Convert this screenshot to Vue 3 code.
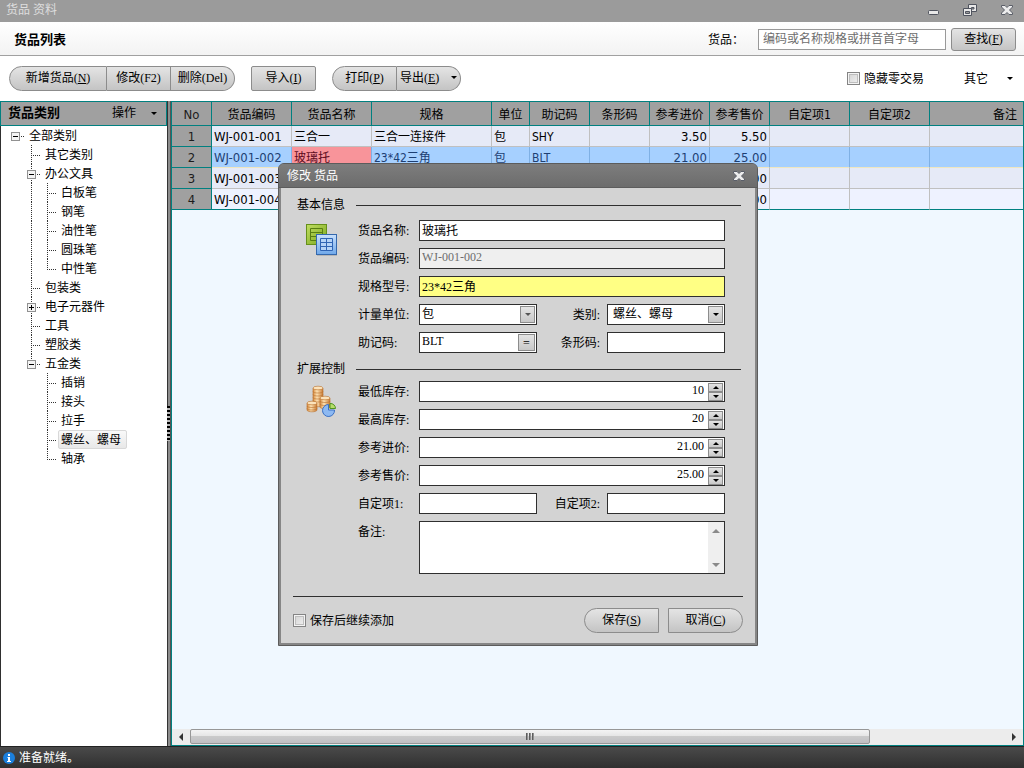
<script setup>
import { ref, computed } from "vue";

const status = ref("准备就绪。");
const keyword = ref("");
const hideZero = ref(false);
const showDialog = ref(true);
const keepAdding = ref(false);
const currentCategory = ref("螺丝、螺母");
const currentRow = ref(2);

// 货品类别树
const categories = ref([
  {
    name: "全部类别",
    open: true,
    children: [
      { name: "其它类别" },
      {
        name: "办公文具",
        open: true,
        children: [
          { name: "白板笔" },
          { name: "钢笔" },
          { name: "油性笔" },
          { name: "圆珠笔" },
          { name: "中性笔" },
        ],
      },
      { name: "包装类" },
      { name: "电子元器件", open: false, children: [] },
      { name: "工具" },
      { name: "塑胶类" },
      {
        name: "五金类",
        open: true,
        children: [
          { name: "插销" },
          { name: "接头" },
          { name: "拉手" },
          { name: "螺丝、螺母" },
          { name: "轴承" },
        ],
      },
    ],
  },
]);

// 展开成平铺的行，guides 为每一级的连接线
function flatten(nodes, guides, depth) {
  const rows = [];
  nodes.forEach((node, i) => {
    const last = i === nodes.length - 1;
    rows.push({ node, guides, depth, last });
    if (node.children && node.open) {
      const next = depth === 0 ? [false] : [...guides, !last];
      rows.push(...flatten(node.children, next, depth + 1));
    }
  });
  return rows;
}

const treeRows = computed(() => flatten(categories.value, [], 0));

// 表格列
const columns = [
  { key: "code", label: "货品编码", cls: "w80 latin" },
  { key: "name", label: "货品名称", cls: "w80" },
  { key: "spec", label: "规格", cls: "w120" },
  { key: "unit", label: "单位", cls: "w38" },
  { key: "memo", label: "助记码", cls: "w60" },
  { key: "barcode", label: "条形码", cls: "w60" },
  { key: "cost", label: "参考进价", cls: "w60 latin num" },
  { key: "price", label: "参考售价", cls: "w60 latin num" },
  { key: "custom1", label: "自定项1", cls: "w80" },
  { key: "custom2", label: "自定项2", cls: "w80" },
  { key: "remark", label: "备注", cls: "rest" },
];

const goods = ref([
  { no: 1, code: "WJ-001-001", name: "三合一", spec: "三合一连接件", unit: "包", memo: "SHY", cost: "3.50", price: "5.50" },
  { no: 2, code: "WJ-001-002", name: "玻璃托", spec: "23*42三角", unit: "包", memo: "BLT", cost: "21.00", price: "25.00" },
  { no: 3, code: "WJ-001-003", price: "0.00" },
  { no: 4, code: "WJ-001-004", price: "0.00" },
]);

const form = ref({
  name: "玻璃托",
  code: "WJ-001-002",
  spec: "23*42三角",
  unit: "包",
  category: "螺丝、螺母",
  memo: "BLT",
  barcode: "",
  custom1: "",
  custom2: "",
  remark: "",
});

const numbers = ref([
  { id: "min", label: "最低库存", value: "10", digits: 0 },
  { id: "max", label: "最高库存", value: "20", digits: 0 },
  { id: "cost", label: "参考进价", value: "21.00", digits: 2 },
  { id: "price", label: "参考售价", value: "25.00", digits: 2 },
]);

function step(item, delta) {
  item.value = (Number(item.value) + delta).toFixed(item.digits);
}
</script>

<template>
  <div class="window">
    <header class="titlebar">
      <span class="titlebar-text">货品 资料</span>
      <div class="titlebar-btns">
        <button aria-label="最小化">
          <svg width="14" height="14" viewBox="0 0 14 14">
            <rect x="2.500" y="7.500" width="10" height="4" rx="1" fill="#e8e8e8" stroke="#50545f" />
          </svg>
        </button>
        <button aria-label="还原">
          <svg width="16" height="14" viewBox="0 0 16 14">
            <path d="M6.500 1.500h8v7h-8z" fill="#e8e8e8" stroke="#50545f" />
            <path d="M9.500 4.500h2.500v1.500h-2.500z" fill="#9b9b9b" stroke="#50545f" />
            <path d="M1.500 5.500h8v7h-8z" fill="#e8e8e8" stroke="#50545f" />
            <path d="M3.500 8.500h4v2h-4z" fill="#9b9b9b" stroke="#50545f" />
          </svg>
        </button>
        <button aria-label="关闭">
          <svg width="14" height="14" viewBox="0 0 14 14">
            <path
              d="M1.500 2.500h3.500l2 2 2-2h3.500v1.500L9.500 7l3 3v1.500H9l-2-2-2 2H1.500V10l3-3-3-3z"
              fill="#ececec"
              stroke="#5a5e68"
            />
          </svg>
        </button>
      </div>
    </header>

    <div class="searchbar">
      <h1 class="page-title">货品列表</h1>
      <label class="search-label" for="keyword">货品：</label>
      <input id="keyword" v-model="keyword" class="search-input" type="text" placeholder="编码或名称规格或拼音首字母" />
      <button class="btn search-btn">查找(<u>F</u>)</button>
    </div>

    <div class="toolbar">
      <div class="btn-group">
        <button class="btn btn-add">新增货品(<u>N</u>)</button>
        <button class="btn btn-edit" @click="showDialog = true">修改(F2)</button>
        <button class="btn btn-del">删除(Del)</button>
      </div>
      <button class="btn btn-import">导入(<u>I</u>)</button>
      <div class="btn-group">
        <button class="btn btn-print">打印(<u>P</u>)</button>
        <button class="btn btn-export"><span>导出(<u>E</u>)</span><i class="caret"></i></button>
      </div>
      <label class="check hide-zero"><input v-model="hideZero" type="checkbox" />隐藏零交易</label>
      <button class="menu-btn">其它<i class="caret"></i></button>
    </div>

    <main class="main">
      <aside class="side">
        <div class="side-head">
          <b>货品类别</b>
          <button class="menu-btn side-menu">操作<i class="caret"></i></button>
        </div>
        <ul class="tree">
          <li v-for="row in treeRows" :key="row.node.name" class="tree-row">
            <svg v-for="(line, i) in row.guides" :key="i" class="tree-cell" width="16" height="19">
              <path v-if="line" class="dots" d="M8.500 0v19" />
            </svg>
            <svg
              class="tree-cell"
              width="16"
              height="19"
              @click="row.node.open = !row.node.open"
            >
              <path v-if="row.depth" class="dots" :d="row.last ? 'M8.500 0v10' : 'M8.500 0v19'" />
              <path class="dots" d="M8 10.500h10" />
              <g v-if="row.node.children">
                <rect x="4.500" y="6.500" width="8" height="8" fill="#f4f4f4" stroke="#919191" />
                <path d="M6 10.500h5" stroke="#000" />
                <path v-if="!row.node.open" d="M8.500 8v5" stroke="#000" />
              </g>
            </svg>
            <a
              class="tree-label"
              :class="{ active: row.node.name === currentCategory }"
              href="#"
              @click.prevent="currentCategory = row.node.name"
              >{{ row.node.name }}</a
            >
          </li>
        </ul>
      </aside>

      <div class="splitter"><span class="splitter-grip"></span></div>

      <section class="grid">
        <table class="goods">
          <thead>
            <tr>
              <th class="no">No</th>
              <th v-for="col in columns" :key="col.key" :class="col.cls">{{ col.label }}</th>
            </tr>
          </thead>
          <tbody>
            <tr
              v-for="item in goods"
              :key="item.no"
              :class="{ current: item.no === currentRow }"
              @click="currentRow = item.no"
            >
              <td class="no">{{ item.no }}</td>
              <td
                v-for="col in columns"
                :key="col.key"
                :class="[col.cls, { focus: item.no === currentRow && col.key === 'name' }]"
              >
                {{ item[col.key] }}
              </td>
            </tr>
          </tbody>
        </table>
        <div class="hscroll">
          <button class="hscroll-btn" aria-label="向左"><i class="tri left"></i></button>
          <div class="hscroll-thumb"><i></i><i></i><i></i></div>
          <div class="hscroll-rest"></div>
          <button class="hscroll-btn" aria-label="向右"><i class="tri right"></i></button>
        </div>
      </section>
    </main>

    <footer class="statusbar">
      <svg width="12" height="12" viewBox="0 0 12 12">
        <circle cx="6" cy="6" r="6" fill="#1b7fdc" />
        <path d="M5 2h2v2H5zM4.500 5H7v4h1v1H4V9h1V6h-.5z" fill="#fff" />
      </svg>
      <span>{{ status }}</span>
    </footer>

    <!-- 修改货品 -->
    <div v-if="showDialog" class="dialog" role="dialog">
      <div class="dialog-head">
        <span>修改 货品</span>
        <button aria-label="关闭" @click="showDialog = false">
          <svg width="14" height="14" viewBox="0 0 14 14">
            <path
              d="M1.500 2.500h3.500l2 2 2-2h3.500v1.500L9.500 7l3 3v1.500H9l-2-2-2 2H1.500V10l3-3-3-3z"
              fill="#ececec"
              stroke="#5a5e68"
            />
          </svg>
        </button>
      </div>

      <form class="dialog-body" @submit.prevent>
        <h2 class="section-title">基本信息</h2>
        <div class="section">
          <svg class="section-icon" width="34" height="34" viewBox="0 0 34 34">
            <defs>
              <linearGradient id="sheetGreen" x1="0" y1="0" x2="1" y2="1">
                <stop offset="0" stop-color="#c0de62" />
                <stop offset="1" stop-color="#7aa51c" />
              </linearGradient>
              <linearGradient id="sheetBlue" x1="0" y1="0" x2="0" y2="1">
                <stop offset="0" stop-color="#c9e0fb" />
                <stop offset="1" stop-color="#6fa8ea" />
              </linearGradient>
            </defs>
            <rect x=".5" y=".5" width="20" height="20" fill="url(#sheetGreen)" stroke="#66901a" />
            <path d="M4.500 4.500h12v12h-12zM4.500 8.500h12M4.500 12.500h12" fill="none" stroke="#587e12" />
            <rect x="11" y="31" width="20" height="1" fill="#b5b5b5" />
            <rect x="10.500" y="10.500" width="20" height="20" fill="url(#sheetBlue)" stroke="#3468ad" />
            <path d="M14.500 14.500h12v12h-12zM14.500 18.500h12M14.500 22.500h12M20.500 14.500v12" fill="#b4d3f7" stroke="#2f64b4" />
          </svg>
          <div class="fields">
            <label for="f-name">货品名称:</label>
            <input id="f-name" v-model="form.name" class="field wide" type="text" />

            <label for="f-code">货品编码:</label>
            <input id="f-code" v-model="form.code" class="field wide readonly" type="text" readonly />

            <label for="f-spec">规格型号:</label>
            <input id="f-spec" v-model="form.spec" class="field wide editing" type="text" />

            <label for="f-unit">计量单位:</label>
            <div class="combo">
              <select id="f-unit" v-model="form.unit" class="field">
                <option>包</option>
              </select>
              <span class="combo-arrow muted"><i class="caret"></i></span>
            </div>
            <label class="second" for="f-category">类别:</label>
            <div class="combo">
              <select id="f-category" v-model="form.category" class="field indent">
                <option>螺丝、螺母</option>
              </select>
              <span class="combo-arrow"><i class="caret"></i></span>
            </div>

            <label for="f-memo">助记码:</label>
            <div class="combo">
              <input id="f-memo" v-model="form.memo" class="field" type="text" />
              <button class="combo-arrow" type="button">=</button>
            </div>
            <label class="second" for="f-barcode">条形码:</label>
            <input id="f-barcode" v-model="form.barcode" class="field" type="text" />
          </div>
        </div>

        <h2 class="section-title extra">扩展控制</h2>
        <div class="section extra">
          <svg class="section-icon" width="34" height="34" viewBox="0 0 34 34">
            <defs>
              <linearGradient id="coin" x1="0" y1="0" x2="1" y2="0">
                <stop offset="0" stop-color="#d68a3e" />
                <stop offset=".4" stop-color="#fde2b4" />
                <stop offset="1" stop-color="#c87a34" />
              </linearGradient>
            </defs>
            <g stroke="#b9702e" stroke-width=".6">
              <path d="M7 3v17c0 2.400 10 2.400 10 0V3" fill="url(#coin)" />
              <path d="M7 6.500c0 2 10 2 10 0M7 9.500c0 2 10 2 10 0M7 12.500c0 2 10 2 10 0M7 15.500c0 2 10 2 10 0" fill="none" />
              <ellipse cx="12" cy="3" rx="5" ry="1.800" fill="#fce3bb" />
              <path d="M14 13v9c0 2.400 10 2.400 10 0v-9" fill="url(#coin)" />
              <path d="M14 16c0 2 10 2 10 0M14 19c0 2 10 2 10 0" fill="none" />
              <ellipse cx="19" cy="13" rx="5" ry="1.800" fill="#fce3bb" />
              <path d="M1 18v7c0 2.400 10 2.400 10 0v-7" fill="url(#coin)" />
              <path d="M1 21c0 2 10 2 10 0M1 23.500c0 2 10 2 10 0" fill="none" />
              <ellipse cx="6" cy="18" rx="5" ry="1.800" fill="#fce3bb" />
            </g>
            <path d="M22.500 19.500v5.500h6a6 6 0 1 1-6-5.500z" fill="#8db9f2" stroke="#3a70c4" />
            <path d="M24 18.500a5 5 0 0 1 5.500 5H24z" fill="#b7dd6a" stroke="#4f9421" />
          </svg>
          <div class="fields">
            <template v-for="item in numbers" :key="item.id">
              <label :for="'f-' + item.id">{{ item.label }}:</label>
              <div class="spin wide">
                <input :id="'f-' + item.id" v-model="item.value" class="field" type="text" />
                <span class="spin-btns">
                  <button type="button" aria-label="增加" @click="step(item, 1)"><i class="caret up"></i></button>
                  <button type="button" aria-label="减少" @click="step(item, -1)"><i class="caret"></i></button>
                </span>
              </div>
            </template>

            <label for="f-custom1">自定项1:</label>
            <input id="f-custom1" v-model="form.custom1" class="field" type="text" />
            <label class="second" for="f-custom2">自定项2:</label>
            <input id="f-custom2" v-model="form.custom2" class="field" type="text" />

            <label for="f-remark">备注:</label>
            <div class="memo wide">
              <textarea id="f-remark" v-model="form.remark"></textarea>
              <span class="memo-scroll"><i class="caret up"></i><i class="caret"></i></span>
            </div>
          </div>
        </div>

        <div class="dialog-foot">
          <label class="check"><input v-model="keepAdding" type="checkbox" />保存后继续添加</label>
          <button class="btn save" type="submit">保存(<u>S</u>)</button>
          <button class="btn cancel" type="button" @click="showDialog = false">取消(<u>C</u>)</button>
        </div>
      </form>
    </div>
  </div>
</template>

<style>
body {
  margin: 0;
}
</style>

<style scoped>
.window {
  position: relative;
  display: flex;
  flex-direction: column;
  min-height: 100vh;
  background: #fff;
  color: #000;
  font: 12px/16px "Liberation Serif", "Noto Sans CJK SC", sans-serif;
}

.window * {
  box-sizing: border-box;
}

button,
input,
select,
textarea {
  font: inherit;
  color: inherit;
  margin: 0;
  padding: 0;
  border-radius: 0;
  outline: none;
}

button {
  background: none;
  border: none;
  white-space: nowrap;
}

svg {
  display: block;
  flex-shrink: 0;
}

.caret {
  display: inline-block;
  border: 3px solid transparent;
  border-top-color: #000;
  border-bottom-width: 0;
}

.caret.up {
  border-top-width: 0;
  border-bottom: 3px solid #000;
}

/* 标题栏 */
.titlebar {
  display: flex;
  align-items: center;
  justify-content: space-between;
  height: 22px;
  padding: 0 10px 2px 6px;
  background: #9b9b9b;
  color: #dedede;
}

.titlebar-btns {
  display: flex;
  gap: 22px;
}

/* 查找栏 */
.searchbar {
  display: flex;
  align-items: center;
  height: 34px;
  padding: 2px 8px 0 14px;
  background: linear-gradient(#fff, #f3f3f3);
  border-bottom: 1px solid #a0a0a0;
}

.page-title {
  flex: 1;
  margin: 0;
  font-size: 13px;
  line-height: 16px;
}

.search-label {
  margin-right: 14px;
}

.search-input {
  width: 188px;
  height: 21px;
  padding: 0 4px;
  border: 1px solid #999;
  background: #fff;
}

.search-input::placeholder {
  color: #6d6d6d;
  opacity: 1;
}

.btn {
  height: 25px;
  border: 1px solid #8c8c8c;
  background: linear-gradient(#e4e4e4, #c4c4c4);
  padding-bottom: 2px;
}

.search-btn {
  width: 65px;
  height: 23px;
  margin-left: 5px;
  border-radius: 3px;
}

/* 工具栏 */
.toolbar {
  display: flex;
  align-items: center;
  height: 45px;
  padding: 0 11px 0 9px;
}

.btn-group {
  display: flex;
}

.btn-group .btn:first-child {
  border-radius: 13px 0 0 13px;
}

.btn-group .btn:last-child {
  border-radius: 0 13px 13px 0;
}

.btn-group .btn + .btn {
  border-left: none;
}

.btn-add {
  width: 98px;
}

.btn-edit,
.btn-del {
  width: 64px;
}

.btn-import {
  width: 65px;
  margin: 0 16px;
  border-radius: 2px;
}

.btn-print {
  width: 65px;
}

.btn-export {
  display: flex;
  align-items: center;
  justify-content: space-between;
  width: 64px;
  padding: 0 3px 2px;
}

.check {
  display: flex;
  align-items: center;
  gap: 4px;
}

.check input {
  appearance: none;
  width: 13px;
  height: 13px;
  border: 1px solid #848484;
  background: linear-gradient(135deg, #d2d2d2, #f2f2f2);
  box-shadow: inset 0 0 0 1px #f4f4f4, inset 0 0 0 2px #bebebe;
}

.hide-zero {
  margin-left: auto;
  margin-right: 40px;
}

.menu-btn {
  display: flex;
  align-items: center;
  justify-content: space-between;
  width: 49px;
}

/* 类别树 */
.main {
  display: flex;
  flex: 1;
}

.side {
  width: 167px;
  border-left: 1px solid #2f2f2f;
}

.side-head {
  display: flex;
  align-items: center;
  justify-content: space-between;
  height: 25px;
  margin-left: -1px;
  padding: 0 9px 1px 7px;
  border: 1px solid #008080;
  background: #a0a0a0;
}

.side-head b {
  font-size: 13px;
}

.side-menu {
  width: 45px;
}

.tree {
  list-style: none;
  margin: 0;
  padding: 0 0 0 6px;
}

.tree-row {
  display: flex;
  height: 19px;
}

.tree-cell {
  overflow: visible;
}

.dots {
  stroke: #333;
  stroke-dasharray: 1 1;
  fill: none;
}

.tree-label {
  margin-left: 3px;
  padding: 1px 5px 0 2px;
  border: 1px solid transparent;
  border-radius: 2px;
  color: #000;
  line-height: 17px;
  text-decoration: none;
}

.tree-label.active {
  border-color: #d8d8d8;
  background: linear-gradient(#f9f9f9, #e8e8e8);
}

.splitter {
  display: flex;
  align-items: center;
  width: 4px;
  background: linear-gradient(90deg, #333 1px, #8c8c8c 1px, #8c8c8c 3px, #555 3px);
}

.splitter-grip {
  width: 3px;
  height: 35px;
  background: repeating-linear-gradient(#000 0, #000 2px, #bbb 2px, #bbb 4px);
}

/* 货品表格 */
.grid {
  display: flex;
  flex-direction: column;
  flex: 1;
  min-width: 0;
  border: 1px solid #008080;
  background: #f0f8ff;
}

.goods {
  width: 100%;
  table-layout: fixed;
  border-collapse: separate;
  border-spacing: 0;
}

.goods th {
  height: 24px;
  padding: 3px 0 0;
  border-right: 1px solid #008080;
  border-bottom: 1px solid #008080;
  background: #a0a0a0;
  font-weight: normal;
  white-space: nowrap;
}

.goods th,
.goods td {
  font-family: "DejaVu Sans Condensed", "Noto Sans", "Noto Sans CJK SC", sans-serif;
}

.goods td {
  height: 21px;
  padding: 1px 2px 0 2px;
  border-right: 1px solid #c0c0c0;
  border-bottom: 1px solid #c0c0c0;
  background: #e6eaf7;
  white-space: nowrap;
  line-height: 16px;
}

.goods td.latin {
  font-size: 13px;
}

.goods td.num {
  text-align: right;
}

.goods .no {
  width: 40px;
  font-size: 13px;
  text-align: center;
  color: #1c1c1c;
}

.goods td.no {
  background: #a0a0a0;
  border-color: #008080;
}

.goods tr:last-child td {
  background: #eef2ff;
  border-bottom-color: #008080;
}

.goods tr:last-child td.no {
  background: #a0a0a0;
}

.goods .current td {
  background: #a6d0ff;
  border-right-color: #7fb0e4;
  border-bottom-color: #efe6c0;
  color: #1d3f73;
}

.goods .current td.no {
  background: #a0a0a0;
  border-color: #008080;
  color: #1c1c1c;
}

.goods .current td.focus {
  background: #f8949a;
  color: #5c0a1c;
}

.goods .w38 {
  width: 38px;
}

.goods .w60 {
  width: 60px;
}

.goods .w80 {
  width: 80px;
}

.goods .w120 {
  width: 120px;
}

.goods .rest {
  border-right: none;
}

.goods th.rest {
  padding-right: 6px;
  text-align: right;
}

.hscroll {
  display: flex;
  height: 16px;
  margin-top: auto;
  background: #ececec;
}

.hscroll-btn {
  display: flex;
  align-items: center;
  justify-content: center;
  width: 18px;
}

.tri {
  border: 4px solid transparent;
}

.tri.left {
  border-left-width: 0;
  border-right-color: #333;
}

.tri.right {
  border-right-width: 0;
  border-left-color: #333;
}

.hscroll-thumb {
  display: flex;
  align-items: center;
  justify-content: center;
  gap: 1px;
  flex: 5;
  height: 15px;
  border: 1px solid #979797;
  border-radius: 2px;
  background: linear-gradient(#f4f4f4, #e4e4e4 50%, #cacaca 50%, #c0c0c4);
}

.hscroll-thumb i {
  width: 2px;
  height: 7px;
  background: linear-gradient(90deg, #444, #aaa);
}

.hscroll-rest {
  flex: 1;
}

/* 状态栏 */
.statusbar {
  display: flex;
  align-items: center;
  gap: 4px;
  height: 22px;
  padding: 1px 3px 0;
  border-top: 1px solid #222;
  background: linear-gradient(#4a4a4a, #303030);
  color: #fff;
}

/* 对话框 */
.dialog {
  position: absolute;
  top: 163px;
  left: 278px;
  width: 480px;
  border: 1px solid #5c5c5c;
  border-radius: 6px 6px 0 0;
  background: #868686;
  overflow: hidden;
}

.dialog-head {
  display: flex;
  align-items: center;
  justify-content: space-between;
  height: 24px;
  padding: 0 11px 0 8px;
  border-bottom: 1px solid #5c5c5c;
  background: linear-gradient(#7d7d7d, #6c6c6c);
  color: #fff;
}

.dialog-body {
  margin: 0 2px 2px;
  padding: 8px 12px 10px;
  background: #d3d3d3;
}

.section-title {
  display: flex;
  align-items: center;
  gap: 11px;
  height: 18px;
  margin: 0 2px 6px 4px;
  font-size: 12px;
  line-height: 18px;
  font-weight: normal;
}

.section-title::after {
  content: "";
  flex: 1;
  height: 1px;
  background: #2f2f2f;
}

.section-title.extra {
  margin-top: 7px;
  margin-bottom: 3px;
}

.section {
  display: flex;
  padding: 0 18px 0 13px;
}

.section-icon {
  margin: 4px 18px 0 0;
}

.fields {
  display: grid;
  grid-template-columns: 61px 1fr 70px 1fr;
  gap: 7px 0;
  flex: 1;
}

.fields label {
  padding-top: 1px;
  line-height: 20px;
}

.fields label.second {
  padding-right: 7px;
  text-align: right;
}

.wide {
  grid-column: span 3;
}

.field {
  display: block;
  width: 100%;
  height: 21px;
  min-width: 0;
  padding: 0 2px 2px;
  border: 1px solid #2f2f2f;
  background: #fff;
  appearance: none;
}

.field.readonly {
  background: #efefef;
  color: #6d6d6d;
}

.field.editing {
  background: #ffff84;
}

.field.indent {
  padding-left: 5px;
}

.combo,
.spin,
.memo {
  position: relative;
  min-width: 0;
}

.combo-arrow {
  position: absolute;
  top: 2px;
  right: 2px;
  display: flex;
  align-items: center;
  justify-content: center;
  width: 15px;
  height: 17px;
  border: 1px solid #8c8c8c;
  background: linear-gradient(#e4e4e4, #c8c8c8);
  pointer-events: none;
}

button.combo-arrow {
  width: 17px;
  pointer-events: auto;
}

.muted .caret {
  border-top-color: #555;
}

.spin .field {
  padding-right: 20px;
  text-align: right;
}

.spin-btns {
  position: absolute;
  top: 2px;
  right: 2px;
  display: flex;
  flex-direction: column;
}

.spin-btns button {
  display: flex;
  align-items: center;
  justify-content: center;
  width: 15px;
  height: 9px;
  border: 1px solid #8c8c8c;
  background: linear-gradient(#e4e4e4, #c8c8c8);
}

.memo {
  display: flex;
  height: 53px;
  border: 1px solid #2f2f2f;
  background: #fff;
}

.memo textarea {
  flex: 1;
  border: none;
  background: none;
  resize: none;
}

.memo-scroll {
  display: flex;
  flex-direction: column;
  align-items: center;
  justify-content: space-between;
  width: 16px;
  padding: 7px 0 6px;
  background: #efefef;
}

.memo-scroll .caret {
  border-width: 4px;
  border-top-color: #8a8a8a;
  border-bottom-width: 0;
}

.memo-scroll .caret.up {
  border-top-width: 0;
  border-bottom: 4px solid #8a8a8a;
}

.dialog-foot {
  display: flex;
  align-items: center;
  margin-top: 22px;
  padding-top: 11px;
  border-top: 1px solid #2f2f2f;
}

.dialog-foot .check {
  flex: 1;
}

.save {
  width: 75px;
  margin-right: 9px;
  border-radius: 13px 0 0 13px;
}

.cancel {
  width: 75px;
  border-radius: 0 13px 13px 0;
}
</style>
